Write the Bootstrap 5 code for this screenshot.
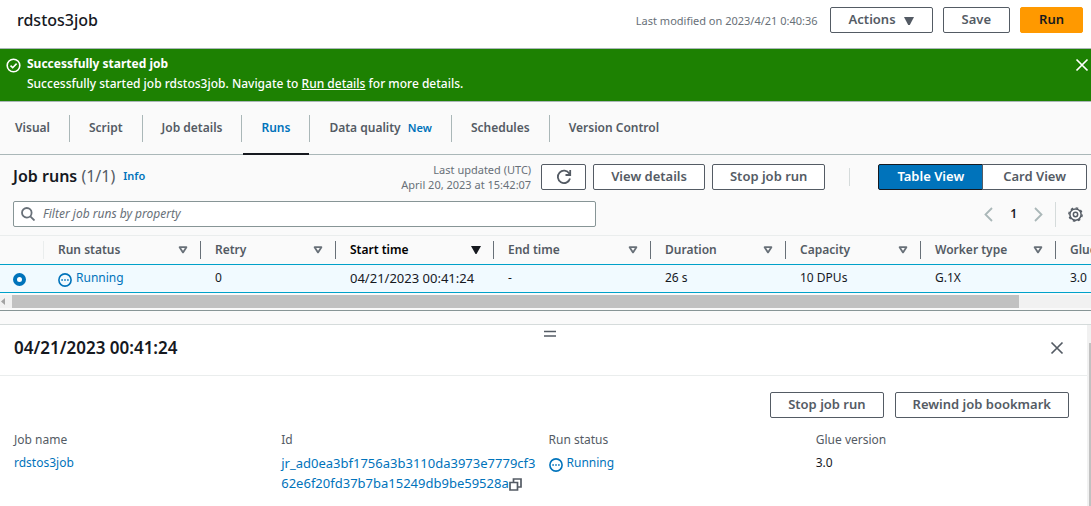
<!DOCTYPE html>
<html lang="en">
<head>
<meta charset="utf-8">
<meta name="viewport" content="width=device-width, initial-scale=1">
<title>rdstos3job</title>
<link href="https://cdn.jsdelivr.net/npm/bootstrap@5.3.0/dist/css/bootstrap.min.css" rel="stylesheet">
<style>
:root{--ink:#16191f;--slate:#545b64;--blue:#0073bb;--rule:#aab7b8;--pale:#eaeded}
html,body{height:100%}
body{font-family:"Noto Sans","Open Sans",sans-serif;font-size:12px;line-height:20px;color:var(--ink);background:#fafafa;overflow:hidden}
a{color:var(--blue);text-decoration:none}
svg{display:block;flex:none}
.topbar{height:49px;padding:0 8px 8px 17px;border-bottom:1px solid var(--rule);background:#fff}
.topbar h1{font-size:16px;line-height:20px;font-weight:500}
.topbar .btn-aws{padding:0 18px 3px}
.actions{gap:10px}
.dim{color:#687078;font-size:11px;line-height:15px}
.stamp{margin:-2px 10px -2px 0}
.num{font-size:13px}
.btn-aws{font-size:13px;line-height:20px;font-weight:600;height:26px;padding:0 17px 3px;border:1px solid var(--slate);border-radius:2px;color:var(--slate);background:#fff;display:inline-flex;align-items:center;justify-content:center;white-space:nowrap}
.btn-run{background:#ff9900;border-color:#ff9900;color:var(--ink)}
.btn-group .btn-aws{padding:0 18px 3px}
.btn-group .btn-aws:last-child{padding:0 20px 3px}
.btn-on,.btn-on:hover{background:var(--blue);border-color:var(--ink);color:#fff}
.btn-icon{width:45px;padding:0}
.run-actions{gap:7px}
.plain{background:none;border:0;padding:0;color:var(--slate)}
.flash{background:#1d8102;color:#fff;height:53px;padding:5px 2px 0 6px;border-bottom:1px solid var(--rule);font-weight:500}
.flash svg{margin-top:4px}
.flash-text{margin-left:6px}
.flash a{color:#fff;text-decoration:underline}
.flash .plain{color:#fff}
.tabs{height:53px;border-bottom:1px solid var(--rule);padding-top:13px}
.tabs a{color:var(--slate);font-weight:600;height:27px;line-height:26px;padding:0 19px;border-right:1px solid var(--rule)}
.tabs li:first-child a{padding-left:15px}
.tabs li:last-child a{border-right:0}
.tabs a.current{color:var(--blue);position:relative}
.tabs a.current::after{content:"";position:absolute;left:1px;right:0;bottom:-13px;height:2px;background:var(--ink)}
.tag{color:var(--blue);font-size:11px;font-weight:600}
.runs-head{padding:9px 4px 0 13px}
.runs-head h2{font-size:16px;line-height:24px;font-weight:600}
.runs-head h2 span{font-weight:400;color:var(--slate)}
.vline{width:1px;background:#d5dbdb}
.pager .vline{height:25px;margin:0 12px}
.page-no{padding:0 17px;font-weight:600}
.filter-row{margin-top:11px}
.filter{width:54.3%;height:26px;border:1px solid #879596;border-radius:2px;background:#fff;padding:0 7px;color:#687078}
.filter input{border:0;outline:0;font-size:12px;line-height:20px;padding:0;background:none}
.filter input::placeholder{font-style:italic;color:#687078}
.runs-table{table-layout:fixed;width:1240px;border-collapse:separate;border-spacing:0;margin-top:8px}
.runs-table th{height:29px;padding:0;border-top:1px solid var(--pale);font-weight:600;color:var(--slate)}
.runs-table th>div{height:18px;line-height:18px;padding:0 12px 0 14px;border-left:1px solid #687078}
.runs-table th.edge>div{border-color:var(--pale)}
.runs-table td{height:29px;padding:0 0 2px 15px;background:#f1faff;border-top:1px solid #00a1c9;border-bottom:1px solid #00a1c9}
.c-pick{width:43px}.c-m{width:135px}.c-l{width:157px}.c-xl{width:158px}
.runs-table input{appearance:none;display:block;width:13px;height:13px;margin:3px 0 0 -2px;border:4px solid var(--blue);border-radius:50%;background:#fff}
.hscroll{height:18px;padding:2px 0;border-bottom:1px solid #879596;background:#fafafa}
.hscroll .rail{height:13px;background:#f1f1f1;padding-left:12px;position:relative}
.hscroll .thumb{height:13px;background:#c1c1c1;width:93.3%}
.hscroll .rail svg{position:absolute;left:1px;top:3px}
.split{margin-top:13px;border-top:1px solid #d5dbdb;background:#fff;min-height:0}
.pane-head{height:51px;padding:13px 23px 0 14px;border-bottom:1px solid var(--pale);position:relative}
.pane-head h2{font-size:17px;line-height:20px;font-weight:600}
.pane-head .plain{margin-top:3px}
.grip{position:absolute;top:5px;left:50%}
.pane-body{padding:16px 4px 0 14px}
.pane-actions{gap:11px;padding-right:14px}
.pane-actions .btn-aws{padding:0 17px 3px}
.facts{margin-top:12px}
.facts dt{font-weight:400;color:var(--slate);margin-bottom:3px}
.facts dd{margin:0;white-space:nowrap}
.vscroll{width:4px;background:#f1f1f1;padding:18px 0 0 2px}
.vscroll div{height:100%;background:#c1c1c1}
</style>
</head>
<body class="d-flex flex-column">
<svg width="0" height="0" class="position-absolute" aria-hidden="true">
<symbol id="run" viewBox="0 0 14 14"><circle cx="7" cy="7" r="6.1" fill="none" stroke="#0073bb" stroke-width="1.6"/><path d="M3.3 6.3h1.6v1.5H3.3zM6.2 6.3h1.6v1.5H6.2zM9.1 6.3h1.6v1.5H9.1z" fill="#0073bb"/></symbol>
<symbol id="sort" viewBox="0 0 10 8"><path d="M1.6 1.2h6.8L5 6.4z" fill="none" stroke="#687078" stroke-width="1.8" stroke-linejoin="round"/></symbol>
<symbol id="x" viewBox="0 0 14 14"><path d="M1.5 1.5l11 11M12.5 1.5l-11 11" stroke="currentColor" stroke-width="1.7"/></symbol>
</svg>

<header class="topbar d-flex align-items-center">
  <h1 class="m-0 me-auto">rdstos3job</h1>
  <span class="dim me-2 pe-1">Last modified on 2023/4/21 0:40:36</span>
  <div class="actions d-flex">
    <button class="btn btn-aws" type="button">Actions<svg class="ms-2 mt-1" width="10" height="8" viewBox="0 0 10 8"><path d="M0 0h10L5.800 8H4.200z" fill="#545b64"/></svg></button>
    <button class="btn btn-aws" type="button">Save</button>
    <button class="btn btn-aws btn-run" type="button">Run</button>
  </div>
</header>

<div class="flash d-flex align-items-start" role="status">
  <svg width="15" height="15" viewBox="0 0 15 15" fill="none" stroke="#fff" stroke-width="1.6"><circle cx="7.500" cy="7.500" r="6.300"/><path d="M4.500 7.700l2.200 2L10.600 5.600"/></svg>
  <div class="flash-text flex-fill"><strong class="d-block fw-bold">Successfully started job</strong>
  <div>Successfully started job rdstos3job. Navigate to <a href="#details">Run details</a> for more details.</div></div>
  <button class="plain" type="button" aria-label="Dismiss"><svg width="14" height="14"><use href="#x"/></svg></button>
</div>

<nav class="tabs" aria-label="Job">
  <ul class="list-unstyled d-flex m-0">
    <li><a class="d-block" href="#visual">Visual</a></li>
    <li><a class="d-block" href="#script">Script</a></li>
    <li><a class="d-block" href="#job">Job details</a></li>
    <li><a class="d-block current" href="#runs" aria-current="page">Runs</a></li>
    <li><a class="d-block" href="#quality">Data quality <span class="tag ms-1">New</span></a></li>
    <li><a class="d-block" href="#schedules">Schedules</a></li>
    <li><a class="d-block" href="#version">Version Control</a></li>
  </ul>
</nav>

<main class="d-flex flex-column flex-fill overflow-hidden">
  <div class="runs-head">
    <div class="d-flex align-items-start">
      <div class="d-flex align-items-center me-auto"><h2 class="m-0">Job runs <span>(1/1)</span></h2><a class="tag ms-2" href="#info">Info</a></div>
      <div class="dim stamp text-end">Last updated (UTC)<br>April 20, 2023 at 15:42:07</div>
      <div class="run-actions d-flex">
        <button class="btn btn-aws btn-icon" type="button" aria-label="Refresh"><svg width="16" height="16" viewBox="0 0 16 16" fill="none" stroke="#545b64" stroke-width="1.8"><path d="M14 9.500A6.200 6.200 0 1 1 13.300 4.600M14.200 1v5H9.500"/></svg></button>
        <button class="btn btn-aws" type="button">View details</button>
        <button class="btn btn-aws" type="button">Stop job run</button>
      </div>
      <div class="vline ms-4 my-1 align-self-stretch"></div>
      <div class="btn-group ms-4 ps-1">
        <button class="btn btn-aws btn-on" type="button" aria-pressed="true">Table View</button>
        <button class="btn btn-aws" type="button" aria-pressed="false">Card View</button>
      </div>
    </div>
    <div class="filter-row d-flex align-items-center justify-content-between">
      <label class="filter d-flex align-items-center"><svg width="14" height="14" viewBox="0 0 14 14" fill="none" stroke="#687078" stroke-width="1.8"><circle cx="5.800" cy="5.800" r="4.800"/><path d="M9.300 9.300l4.200 4.200"/></svg><input class="flex-fill ms-2" type="text" aria-label="Filter job runs" placeholder="Filter job runs by property"></label>
      <div class="pager d-flex align-items-center">
        <button class="plain" type="button" aria-label="Previous page"><svg width="9" height="15" viewBox="0 0 9 15"><path d="M8 1L1.500 7.500L8 14" fill="none" stroke="#aab7b8" stroke-width="1.800"/></svg></button>
        <span class="page-no">1</span>
        <button class="plain" type="button" aria-label="Next page"><svg width="9" height="15" viewBox="0 0 9 15"><path d="M1 1l6.500 6.500L1 14" fill="none" stroke="#aab7b8" stroke-width="1.800"/></svg></button>
        <div class="vline"></div>
        <button class="plain me-1" type="button" aria-label="Preferences"><svg width="15" height="15" viewBox="0 0 16 16" fill="none" stroke="#545b64"><circle cx="8" cy="8" r="6" stroke-width="1.600"/><circle cx="8" cy="8" r="7.100" stroke-width="1.500" stroke-dasharray="2.800 2.776"/><circle cx="8" cy="8" r="2.300" stroke-width="1.600"/></svg></button>
      </div>
    </div>
  </div>

  <div class="overflow-hidden flex-shrink-0">
    <table class="runs-table">
      <colgroup><col class="c-pick"><col class="c-l"><col class="c-m"><col class="c-xl"><col class="c-l"><col class="c-m"><col class="c-m"><col class="c-m"><col></colgroup>
      <thead><tr>
        <th></th>
        <th class="edge"><div class="d-flex align-items-center justify-content-between">Run status<svg width="10" height="8"><use href="#sort"/></svg></div></th>
        <th><div class="d-flex align-items-center justify-content-between">Retry<svg width="10" height="8"><use href="#sort"/></svg></div></th>
        <th class="text-black"><div class="d-flex align-items-center justify-content-between">Start time<svg width="10" height="8" viewBox="0 0 10 8"><path d="M0 0h10L5.500 8h-1z" fill="#16191f"/></svg></div></th>
        <th><div class="d-flex align-items-center justify-content-between">End time<svg width="10" height="8"><use href="#sort"/></svg></div></th>
        <th><div class="d-flex align-items-center justify-content-between">Duration<svg width="10" height="8"><use href="#sort"/></svg></div></th>
        <th><div class="d-flex align-items-center justify-content-between">Capacity<svg width="10" height="8"><use href="#sort"/></svg></div></th>
        <th><div class="d-flex align-items-center justify-content-between">Worker type<svg width="10" height="8"><use href="#sort"/></svg></div></th>
        <th><div>Glue version</div></th>
      </tr></thead>
      <tbody><tr>
        <td><input type="radio" name="run" checked aria-label="Select run"></td>
        <td><a href="#run1" class="d-flex align-items-center"><svg class="me-1 mt-1" width="14" height="14"><use href="#run"/></svg>Running</a></td>
        <td>0</td><td class="num">04/21/2023 00:41:24</td><td>-</td><td>26 s</td><td>10 DPUs</td><td>G.1X</td><td>3.0</td>
      </tr></tbody>
    </table>
  </div>
  <div class="hscroll flex-shrink-0"><div class="rail"><svg width="4" height="7" viewBox="0 0 4 7"><path d="M4 0v7L0 3.500z" fill="#a3a3a3"/></svg><div class="thumb"></div></div></div>

  <section class="split d-flex flex-fill" id="details">
    <div class="flex-fill">
      <div class="pane-head d-flex justify-content-between align-items-start">
        <h2 class="m-0">04/21/2023 00:41:24</h2>
        <svg class="grip" width="12" height="8" viewBox="0 0 12 8"><path d="M0 1.500h12M0 6h12" stroke="#545b64" stroke-width="1.500"/></svg>
        <button class="plain" type="button" aria-label="Close"><svg width="14" height="14"><use href="#x"/></svg></button>
      </div>
      <div class="pane-body">
        <div class="pane-actions d-flex justify-content-end">
          <button class="btn btn-aws" type="button">Stop job run</button>
          <button class="btn btn-aws" type="button">Rewind job bookmark</button>
        </div>
        <dl class="row g-0 facts mb-0">
          <div class="col-3"><dt>Job name</dt><dd><a href="#job">rdstos3job</a></dd></div>
          <div class="col-3"><dt>Id</dt><dd class="num"><a href="#run1">jr_ad0ea3bf1756a3b3110da3973e7779cf3<br>62e6f20fd37b7ba15249db9be59528a</a><button class="plain d-inline-block align-middle" type="button" aria-label="Copy id"><svg width="13" height="13" viewBox="0 0 13 13" fill="none" stroke="#545b64" stroke-width="1.700"><path d="M1 4.500h7.500V12H1zM4.500 4V1H12v8H9"/></svg></button></dd></div>
          <div class="col-3"><dt>Run status</dt><dd><a href="#run1" class="d-flex align-items-center"><svg class="me-1 mt-1" width="14" height="14"><use href="#run"/></svg>Running</a></dd></div>
          <div class="col-3"><dt>Glue version</dt><dd>3.0</dd></div>
        </dl>
      </div>
    </div>
    <div class="vscroll"><div></div></div>
  </section>
</main>
<script src="https://cdn.jsdelivr.net/npm/bootstrap@5.3.0/dist/js/bootstrap.bundle.min.js"></script>
</body>
</html>
